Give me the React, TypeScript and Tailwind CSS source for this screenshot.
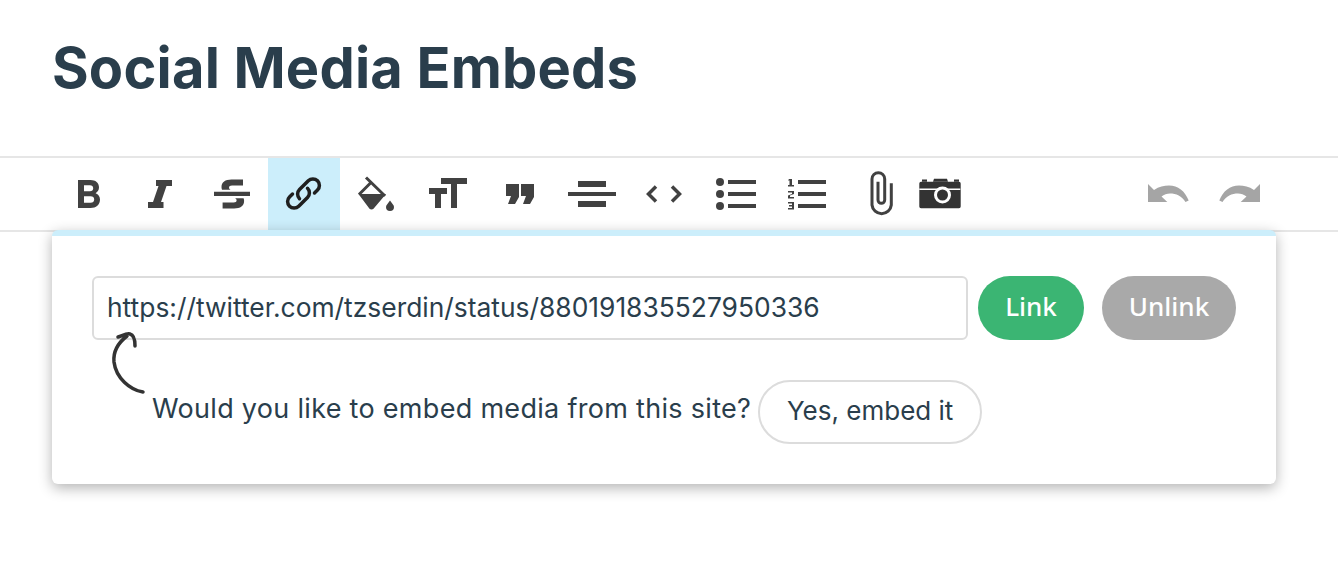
const ink = "#414141";

function Icon({ children, width = 72 }: { children: React.ReactNode; width?: number }) {
  return (
    <svg width={width} height={72} viewBox={`0 0 ${width} 72`} fill={ink} className="block">
      {children}
    </svg>
  );
}

function ToolButton({
  children,
  active,
  width = "w-[72px]",
}: {
  children: React.ReactNode;
  active?: boolean;
  width?: string;
}) {
  return (
    <button
      type="button"
      className={`flex h-[72px] shrink-0 items-center justify-center ${width} ${active ? "bg-[#cceefb]" : ""}`}
    >
      {children}
    </button>
  );
}

const undoPath =
  "M16 26L22 32C27 28.500 32 27.500 37 27.500C46 27.500 53 33 56.700 42.500L53.500 44C50 38 44 35.500 38 35.500C35 35.500 32 36.500 29.500 38.500L35.300 44H16z";

export default function App() {
  return (
    <div className="h-[562px] w-[1338px] overflow-hidden bg-white font-['Inter',sans-serif] text-[#2a3e4c]">
      <h1 className="pl-[52px] pt-[32px] text-[56px] leading-[72px] font-bold tracking-[0.2px]">Social Media Embeds</h1>

      <div className="mt-[52px] border-y-2 border-[#e6e6e6]">
        <div className="flex pl-[52px] pr-[62px]">
          <ToolButton>
            <Icon>
              <path d="M26 22h12.500c5 0 8.500 2.800 8.500 7.300 0 2.700-1.300 4.700-3.400 5.900 2.800 1 4.400 3.300 4.400 6.300 0 5-3.800 8.500-9.500 8.500H26zM32 27.300v6h6c2 0 3.200-1.200 3.200-3s-1.200-3-3.200-3zM32 38.200v6.500h6.500c2.300 0 3.700-1.300 3.700-3.300s-1.400-3.200-3.700-3.200z" fillRule="evenodd" />
            </Icon>
          </ToolButton>
          <ToolButton>
            <Icon>
              <path d="M32 22h16v6h-5.500l-5.500 16h2.500v6H24v-6h5l5.500-16H32z" />
            </Icon>
          </ToolButton>
          <ToolButton>
            <Icon>
              <path d="M18 33.700h36V38H18z" />
              <path d="M47 21.500v6H36c-2 0-3 .8-3 2 0 1 .5 1.700 1.500 2.200H26c-.4-1-.5-1.800-.5-2.700 0-4.800 3.700-7.500 10-7.500z" />
              <path d="M26.600 50.500v-6h11c2 0 3-.8 3-2 0-1-.5-1.700-1.500-2.200h8.500c.4 1 .5 1.800.5 2.700 0 4.800-3.700 7.500-10 7.500z" />
            </Icon>
          </ToolButton>
          <ToolButton active>
            <Icon>
              <g fill="none" stroke="#1f1f1f" strokeWidth="3.500" strokeLinecap="round">
                <path d="M46.500 35L49.500 32a6.500 6.500 0 0 0-9.200-9.200L31.500 31.500a6.500 6.500 0 0 0 0 9.200" />
                <path d="M24.500 36L21.500 39a6.500 6.500 0 0 0 9.200 9.200L39.500 39.500a6.500 6.500 0 0 0 0-9.200" />
              </g>
            </Icon>
          </ToolButton>
          <ToolButton>
            <Icon>
              <path d="M26 19.500L45 38M31 24.500L19 36.500" fill="none" stroke={ink} strokeWidth="3" />
              <path d="M18.500 36H46L33.500 50.800c-1 1-3 1-4 0zM50 42.500c2 3 4 4.500 4 6.500a4 4 0 0 1-8 0c0-2 2-3.500 4-6.500z" />
            </Icon>
          </ToolButton>
          <ToolButton>
            <Icon>
              <path d="M17 30h18v6h-6v14h-6V36h-6zM29 20h26v6H45v24h-6V26H29z" />
            </Icon>
          </ToolButton>
          <ToolButton>
            <Icon>
              <path d="M22 26h13v13l-4 7h-7l3-8h-5zM37 26h13v13l-4 7h-7l3-8h-5z" />
            </Icon>
          </ToolButton>
          <ToolButton>
            <Icon>
              <path d="M22 23h28v6H22zM12 34h48v4H12zM22 43h28v6H22z" />
            </Icon>
          </ToolButton>
          <ToolButton>
            <Icon>
              <path d="M28 28.500L20.500 36L28 43.500M44 28.500L51.500 36L44 43.500" fill="none" stroke={ink} strokeWidth="3.500" />
            </Icon>
          </ToolButton>
          <ToolButton>
            <Icon>
              <circle cx="20" cy="24" r="4" />
              <circle cx="20" cy="36" r="4" />
              <circle cx="20" cy="48" r="4" />
              <path d="M28 22h28v4H28zM28 34h28v4H28zM28 46h28v4H28z" />
            </Icon>
          </ToolButton>
          <ToolButton>
            <Icon>
              <path d="M26 22h28v4H26zM26 34h28v4H26zM26 46h28v4H26z" />
              <path d="M17 21h3v6h2v1.500h-6V27h1.500v-4.500H16zM16 33h6v3l-4 1.500V39h4v1.500h-6v-3l4-1.500v-1.500h-4zM16 44h6v7.500h-6V50h4v-1.500h-3V47h3v-1.500h-4z" />
            </Icon>
          </ToolButton>
          <ToolButton>
            <Icon>
              <path d="M47.300 25.300V47a9.700 9.700 0 0 1-19.300 0V21a6.300 6.300 0 0 1 12.700 0V42a3.300 3.300 0 0 1-6.700 0V23.700" fill="none" stroke={ink} strokeWidth="3" />
            </Icon>
          </ToolButton>
          <ToolButton width="w-[48px]">
            <Icon width={48}>
              <path d="M6 21.500h5v2.200H6zM17 23.700l1-3h13l1 3zM38 21.500h5v2.200h-5z" fill="#333" />
              <path d="M5 23.700h38a1.700 1.700 0 0 1 1.700 1.700V48.600a1.700 1.700 0 0 1-1.700 1.700H5a1.700 1.700 0 0 1-1.700-1.700V25.400A1.700 1.700 0 0 1 5 23.700z" fill="#333" />
              <path d="M3.300 30.500h41V32h-41z" fill="#fff" />
              <circle cx="26.500" cy="37" r="7" fill="#333" stroke="#fff" strokeWidth="3" />
            </Icon>
          </ToolButton>
          <div className="ml-auto flex">
            <ToolButton>
              <Icon>
                <path d={undoPath} fill="#a5a5a5" />
              </Icon>
            </ToolButton>
            <ToolButton>
              <Icon>
                <path d={undoPath} fill="#a5a5a5" transform="translate(72 0) scale(-1 1)" />
              </Icon>
            </ToolButton>
          </div>
        </div>
      </div>

      <div className="relative z-10 ml-[52px] mr-[62px] -mt-[2px] rounded-[6px] border-t-[6px] border-[#cceefb] bg-white p-[40px] shadow-[0_4px_14px_rgba(0,0,0,0.3)]">
        <div className="flex">
          <div className="flex h-[64px] flex-1 items-center rounded-[6px] border-2 border-[#dcdcdc] pl-[13px] text-[26.4px]">
            https://twitter.com/tzserdin/status/880191835527950336
          </div>
          <button type="button" className="ml-[10px] h-[64px] w-[106px] rounded-full bg-[#3bb573] pb-[4px] font-['Noto_Sans',sans-serif] text-[26px] font-medium text-white">
            Link
          </button>
          <button type="button" className="ml-[18px] h-[64px] w-[134px] rounded-full bg-[#a9a9a9] pb-[4px] font-['Noto_Sans',sans-serif] text-[26px] font-medium text-white">
            Unlink
          </button>
        </div>
        <div className="mt-[40px] flex items-center pl-[60px] text-[27px] tracking-[0.3px]">
          <span className="pb-[6px]">Would you like to embed media from this site?</span>
          <button type="button" className="ml-[7px] h-[64px] w-[224px] rounded-full border-2 border-[#dcdcdc] pb-[3px] text-[26px] tracking-normal">
            Yes, embed it
          </button>
        </div>
        <svg width="40" height="72" viewBox="0 0 40 72" className="absolute left-[56px] top-[90px]" fill="none" stroke="#333" strokeWidth="3.500" strokeLinecap="round">
          <path d="M35 66C22 64 8 52 6 36C5 26 10 17 19 10M10 11C14 10 18 7 22 8C26 9 27 14 27 20" />
        </svg>
      </div>
    </div>
  );
}
